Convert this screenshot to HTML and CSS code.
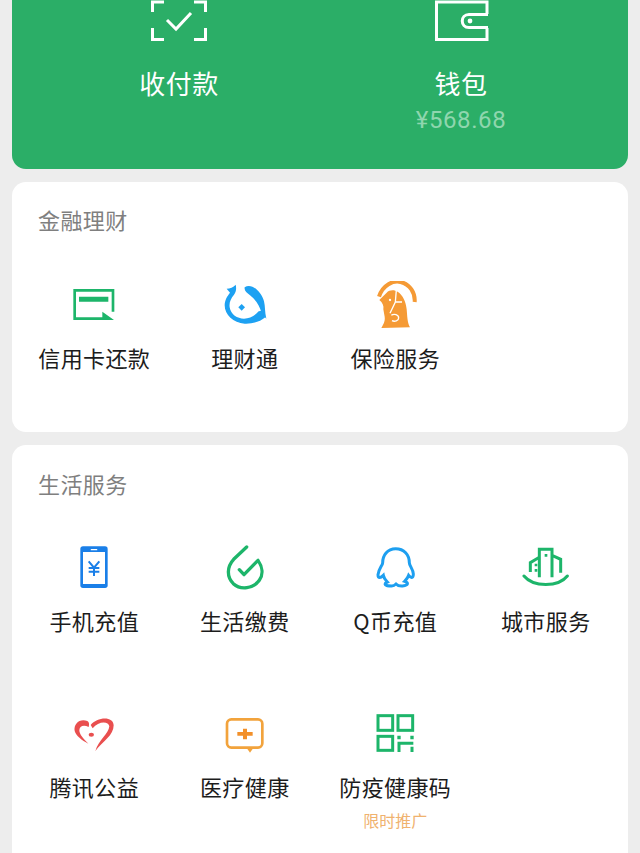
FILE: index.html
```html
<!DOCTYPE html>
<html lang="zh-CN">
<head>
    <meta charset="UTF-8">
    <meta name="viewport" content="width=device-width, initial-scale=1.0">
    <title>服务</title>
    <link rel="stylesheet" href="styles.css">
</head>
<body>
    <section class="wallet-card">
        <div class="wallet-item">
            <svg class="wallet-icon" viewBox="0 0 56 42" fill="none" stroke="#fff" stroke-width="3">
                <path d="M1.5 12V2H13M43 2H54.5V12M1.5 28V39.5H13M43 39.5H54.5V28"/>
                <path d="M16 20L25 29L40 13"/>
            </svg>
            <div class="wallet-label">收付款</div>
        </div>
        <div class="wallet-item">
            <svg class="wallet-icon" viewBox="0 0 56 42" fill="none" stroke="#fff" stroke-width="3">
                <path d="M54 14V2H3.5V39.5H54V28"/>
                <path d="M55 14.5H36C27 14.5 27 27.5 36 27.5H55"/>
                <circle cx="37" cy="21" r="2.4" fill="#fff" stroke="none"/>
            </svg>
            <div class="wallet-label">钱包</div>
            <div class="wallet-amount">¥568.68</div>
        </div>
    </section>

    <section class="card card-finance">
        <h2 class="card-title">金融理财</h2>
        <div class="service-grid">
            <div class="service">
                <svg class="service-icon" viewBox="60 33 144 144">
                    <path d="M189 125V61H74V146H160" fill="none" stroke="#1db56a" stroke-width="8"/>
                    <path d="M87 80H175V95H87ZM157 125L192 150H157Z" fill="#1db56a"/>
                </svg>
                <div class="service-name">信用卡还款</div>
            </div>
            <div class="service">
                <svg class="service-icon" viewBox="3 9 144 144">
                    <path d="M47 20C50 32 48 42 42 50C32 62 27 74 29 88C32 110 52 122 72 122C88 122 104 114 116 100L126 98L136 118C120 132 96 138 74 137C40 135 14 110 14 82C14 66 22 54 30 44L20 32C30 32 40 28 47 20Z" fill="#1da1f2"/>
                    <path d="M74 28C94 14 124 40 132 70C136 86 134 102 139 122L124 104C120 84 106 64 90 52C80 44 72 38 74 28Z" fill="#1da1f2"/>
                    <path d="M65 78L75 88L65 98L55 88Z" fill="#1da1f2"/>
                </svg>
                <div class="service-name">理财通</div>
            </div>
            <div class="service">
                <svg class="service-icon" viewBox="3 15 144 144">
                    <path d="M27 62C38 27 70 12 92 18C120 25 136 50 134 78" fill="none" stroke="#f59a35" stroke-width="12"/>
                    <path d="M28 72L50 50C58 42 72 40 84 48C98 58 108 76 110 100C112 122 112 140 120 154L34 156C40 144 46 136 44 122L40 100C42 90 38 80 28 72Z" fill="#f59a35"/>
                    <path d="M79 42L76 78L60 112M76 78H96" fill="none" stroke="#fff" stroke-width="4"/>
                    <circle cx="60" cy="72" r="3.5" fill="#fff"/>
                    <path d="M64 118C72 112 86 116 86 126C86 134 74 138 66 134" fill="none" stroke="#fff" stroke-width="4"/>
                </svg>
                <div class="service-name">保险服务</div>
            </div>
        </div>
    </section>

    <section class="card card-life">
        <h2 class="card-title">生活服务</h2>
        <div class="service-grid">
            <div class="service">
                <svg class="service-icon" viewBox="60 23 144 144">
                    <rect x="91" y="33" width="82" height="125" rx="8" fill="#1a7fe8"/>
                    <rect x="99" y="50" width="66" height="96" fill="#fff"/>
                    <rect x="122" y="41" width="20" height="4" rx="2" fill="#fff"/>
                    <path d="M116 78L132 97L148 78M132 97V122M116 98H148M116 109H148" fill="none" stroke="#1a7fe8" stroke-width="6"/>
                </svg>
                <div class="service-name">手机充值</div>
            </div>
            <div class="service">
                <svg class="service-icon" viewBox="513 23 144 144">
                    <path d="M590 35L551 72C530 95 530 125 550 145C572 165 610 160 628 135C640 118 638 95 624 75L582 118L568 103" fill="none" stroke="#1db56a" stroke-width="10" stroke-linecap="round" stroke-linejoin="round"/>
                </svg>
                <div class="service-name">生活缴费</div>
            </div>
            <div class="service">
                <svg class="service-icon" viewBox="63 23 144 144">
                    <path d="M137 40C112 40 98 60 98 82C98 90 86 100 84 118C84 130 92 128 100 120C102 130 108 136 112 140C100 145 104 152 125 152C132 152 136 148 138 146C142 150 148 153 158 152C176 150 176 142 164 138C170 132 174 126 176 120C182 128 190 130 190 116C190 102 178 92 178 82C178 58 162 40 137 40Z" fill="none" stroke="#1d9ff0" stroke-width="9"/>
                </svg>
                <div class="service-name">Q币充值</div>
            </div>
            <div class="service">
                <svg class="service-icon" viewBox="516 23 144 144">
                    <g fill="none" stroke="#1db56a" stroke-width="9">
                        <path d="M541 110V82L568 66M568 126V42H606V126M606 60L632 72V112"/>
                        <path d="M522 122C550 156 625 156 652 122" stroke-linecap="round"/>
                    </g>
                    <path d="M554 85H562V93H554ZM554 101H562V109H554ZM584 56H592V64H584Z" fill="#1db56a"/>
                </svg>
                <div class="service-name">城市服务</div>
            </div>
            <div class="service">
                <svg class="service-icon" viewBox="60 26 144 144">
                    <path d="M122 74C140 50 190 45 191 75C191 105 160 122 136 152C146 120 176 100 178 78C176 62 145 62 128 84Z" fill="#e94f4f"/>
                    <path d="M112 62C90 53 70 70 74 92C78 106 95 120 115 130C100 115 88 102 88 90C88 78 100 72 116 80C118 72 118 66 112 62Z" fill="#e94f4f"/>
                    <ellipse cx="124" cy="103" rx="8" ry="6" fill="#e94f4f"/>
                </svg>
                <div class="service-name">腾讯公益</div>
            </div>
            <div class="service">
                <svg class="service-icon" viewBox="513 24 144 144">
                    <rect x="531" y="55" width="106" height="85" rx="13" fill="none" stroke="#f2a33c" stroke-width="8"/>
                    <path d="M588 138H612L600 155Z" fill="#f2a33c"/>
                    <path d="M579 83H591V93H608V104H591V115H579V104H562V93H579Z" fill="#f2902a"/>
                </svg>
                <div class="service-name">医疗健康</div>
            </div>
            <div class="service">
                <svg class="service-icon" viewBox="963 29 144 144">
                    <g fill="none" stroke="#1db56a" stroke-width="9">
                        <rect x="984" y="49" width="44" height="44"/>
                        <rect x="1044" y="49" width="44" height="44"/>
                        <rect x="984" y="111" width="44" height="42"/>
                        <path d="M1047 158V132H1090M1086 142V158"/>
                    </g>
                    <path d="M1042 109H1052V120H1042ZM1081 109H1091V120H1081Z" fill="#1db56a"/>
                </svg>
                <div class="service-name">防疫健康码</div>
                <div class="service-note">限时推广</div>
            </div>
        </div>
    </section>
</body>
</html>
```

FILE: styles.css
```css
body {
    height: 853px;
    margin: 0;
    overflow: hidden;
    font-family: "Noto Sans CJK SC", "Noto Sans", sans-serif;
    background-color: #ededed;
}

.wallet-card {
    display: grid;
    grid-template-columns: repeat(2, 1fr);
    height: 169px;
    margin: 0 12px 13px;
    padding: 0 26px;
    border-radius: 0 0 14px 14px;
    background-color: #2bae67;
    color: #fff;
}

.wallet-item {
    display: flex;
    flex-direction: column;
    align-items: center;
}

.wallet-icon {
    width: 56px;
    height: 42px;
    margin-bottom: 24px;
}

.wallet-label {
    font-size: 26px;
    line-height: 34px;
    letter-spacing: 0.5px;
}

.wallet-amount {
    margin-top: 6px;
    font-family: Roboto, sans-serif;
    font-size: 24px;
    line-height: 28px;
    letter-spacing: 0.6px;
    color: #8fd6ae;
}

.card {
    margin: 0 12px 13px;
    padding: 22px 7px 0;
    border-radius: 14px;
    background-color: #fff;
}

.card-finance {
    height: 228px;
}

.card-life {
    height: 400px;
    padding-top: 23px;
}

.card-title {
    margin: 0 0 47px 19px;
    font-size: 22px;
    font-weight: 400;
    line-height: 30px;
    letter-spacing: 0.4px;
    color: #7f7f7f;
}

.card-life .card-title {
    margin-bottom: 45px;
}

.service-grid {
    display: grid;
    grid-template-columns: repeat(4, 1fr);
    grid-auto-rows: 166px;
}

.service {
    display: flex;
    flex-direction: column;
    align-items: center;
}

.service-icon {
    width: 48px;
    height: 48px;
    margin-bottom: 14px;
}

.card-finance .service-icon {
    margin-bottom: 13px;
}

.service-name {
    font-size: 22px;
    line-height: 30px;
    letter-spacing: 0.4px;
    color: #1c1c1c;
}

.service-note {
    margin-top: 8px;
    font-size: 16px;
    line-height: 22px;
    color: #f0b26e;
}
```
